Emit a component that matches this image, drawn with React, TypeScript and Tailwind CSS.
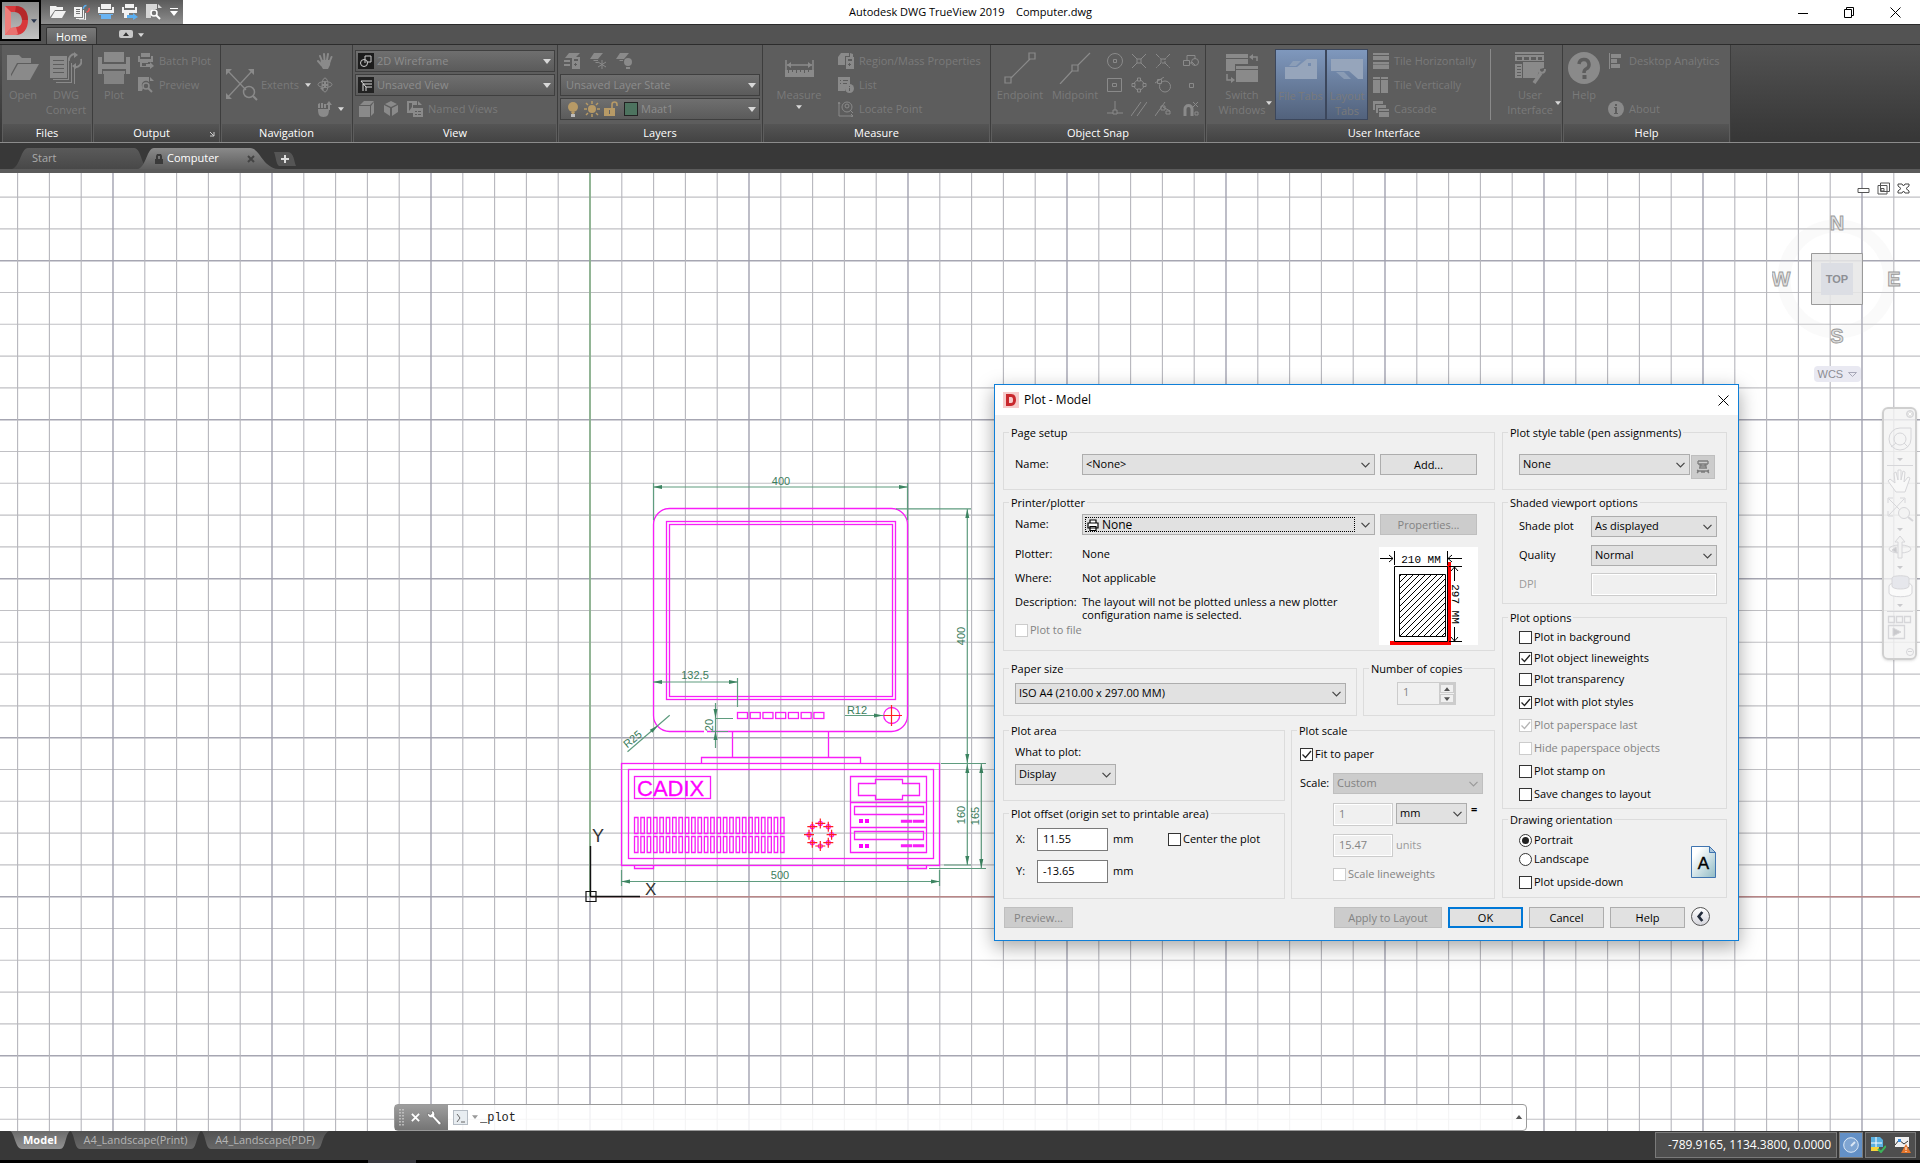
import type { ReactNode } from "react";
import clsx from "clsx";
import { twMerge } from "tailwind-merge";

const UI = "font-['Open_Sans','Noto_Sans',sans-serif]";

/* ---------- small helpers ---------- */

function Ico({ s = 16, className, children }: { s?: number; className?: string; children: ReactNode }) {
    return (
        <svg viewBox={`0 0 ${s} ${s}`} width={s} height={s} fill="currentColor" className={clsx("shrink-0", className)} aria-hidden="true">
            {children}
        </svg>
    );
}

function Caret({ className }: { className?: string }) {
    return (
        <svg viewBox="0 0 8 5" className={twMerge("h-[4px] w-[6px] shrink-0 fill-[#d8d8d8]", className)} aria-hidden="true">
            <path d="M0 0h8L4 5z" />
        </svg>
    );
}

/* ---------- ribbon icons ---------- */

const line = { fill: "none", stroke: "currentColor" };

const icons = {
    folder: <Ico s={32}><path d="M0 3h12l3 3h9v5H10L4 22v6H0z" /><path d="M11 12h21l-9 16H2z" /></Ico>,
    convert: (
        <Ico s={32}>
            <path fillRule="evenodd" d="M0 4h17v22H0zM3 8v1h11V8zm0 4v1h11v-1zm0 4v1h11v-1zm0 4v1h11v-1z" />
            <path d="M18 8h1v20H3v-1h15zM21 11h1v20H6v-1h15zM24 13h1v20H9v-1h15z" />
            <path {...line} strokeWidth="2" d="M19 9a6 6 0 0 1 6-7M31 7a6 6 0 0 1-7 8" />
            <path d="M24 0l4 3-4 3zM26 17l-4-3 4-3z" />
        </Ico>
    ),
    plot: <Ico s={32}><path d="M6 0h20v10H6zM0 5h4v7h24V5h4v17h-4v-5H4v5H0z" /><path d="M5 19h22v3H5zM6 22h20v10H6z" opacity=".85" /></Ico>,
    batch: <Ico><path d="M3 0h9v4H3zM0 3h2v3h11V3h2v6H0z" /><path d="M2 9h8v1H4v3h5v1H2zM8 11h4V9l4 4-4 3v-2H8z" /></Ico>,
    preview: <Ico><path d="M0 0h11v5a4 4 0 0 0-6 6l-1 3H0zM12 0l4 4h-4z" /><circle cx="8" cy="9" r="3" {...line} strokeWidth="1.5" /><path {...line} strokeWidth="2" d="M10 11l4 4" /></Ico>,
    extents: (
        <Ico s={32}>
            <path {...line} strokeWidth="1.3" d="M2 2l18 19M26 2L2 28" />
            <path d="M0 0h6L0 6zM28 0v6l-6-6zM0 30v-6l6 6z" />
            <circle cx="23" cy="23" r="5.5" {...line} strokeWidth="1.5" /><path {...line} strokeWidth="2" d="M27 27l4 4" />
        </Ico>
    ),
    hand: (
        <Ico>
            <path {...line} strokeWidth="2" strokeLinecap="round" d="M5 8L3 3M7.500 7L7 1M10 7l1-6M12.500 9l2-5M4.500 12L1 8" />
            <path d="M4 7h9.500l-.5 5-2 4H6l-3-5z" />
        </Ico>
    ),
    orbit: <Ico><ellipse cx="8" cy="7.500" rx="7" ry="3" {...line} /><ellipse cx="8" cy="8" rx="3" ry="7" {...line} /><path d="M7 5h2v2h2v2H9v2H7V9H5V7h2zM3 11l4-1-1 4z" /></Ico>,
    steer: <Ico><path d="M1 8h11c0 5-1 8-5.500 8S1 13 1 8zM1 3l2-1v5H1zM4 2h2v5H4zM7 3h2v4H7zM12 0l3 4h-2v5h-2V4H9z" /></Ico>,
    cube: <Ico><path d="M0 5h11v11H0zM1 4l4-4h10l-4 4zM12 5l3-4v11l-3 3z" /></Ico>,
    iso: <Ico><path d="M8 0l6 3-6 3-6-3zM1 4l6 3v8l-6-4zM15 4L9 7v8l6-4z" /></Ico>,
    named: <Ico><path fillRule="evenodd" d="M0 0h10v4H6v8H0zM2 10l3-4V2H2zM11 0l4 4h-4z" /><path fillRule="evenodd" d="M6 7h10v9H6zM8 10v1h2v-1zm3 0v1h3v-1zm-3 3v1h2v-1zm3 0v1h3v-1z" /></Ico>,
    wire: <Ico><path d="M0 0h16v16H0z" fill="#1c1c1c" /><circle cx="6" cy="10" r="3.5" fill="none" stroke="#ccc" /><path fill="none" stroke="#ccc" d="M7 10V3h6v6H9" /></Ico>,
    unview: <Ico><path d="M0 0h16v16H0z" fill="#222" /><path fill="none" stroke="#ddd" d="M3 4h11M5 14V7h9M8 14v-4h6M3 4l5 6" /></Ico>,
    layerProps: <Ico><path d="M5 0h11l-5 5H1zM0 7h6v2H0zM0 11h6v2H0z" /><path fillRule="evenodd" d="M8 4h8v12H8zM10 6v2h4V6zm1 4v1h-1v1h1v1h1v-1h1v-1h-1v-1z" /></Ico>,
    layerFreeze: <Ico><path d="M4 0h9L8 6H0zM3 7h5v1H4zM5 9h3v1H6z" /><path {...line} d="M12 7v9M8 9l8 5M16 9l-8 5" /></Ico>,
    layerOff: <Ico><path d="M4 0h9L8 6H0zM3 7h4v1H4z" /><circle cx="12" cy="9" r="4" /><path d="M10 14h4v2h-4z" /></Ico>,
    bulb: <Ico className="text-[#b79a66]"><circle cx="8" cy="6" r="5" /><path d="M6 11h4l-1 2H7z" /><path d="M6 13h4v3H6z" fill="#bbb" /></Ico>,
    sun: <Ico className="text-[#b79a66]"><circle cx="8" cy="8" r="4" /><path {...line} strokeWidth="1.5" d="M8 0v3M8 13v3M0 8h3M13 8h3M2 2l2 2M12 12l2 2M14 2l-2 2M4 12l-2 2" /></Ico>,
    lock: <Ico className="text-[#b79a66]"><path fillRule="evenodd" d="M1 7h11v8H1zM6 9v4h1V9z" /><path {...line} strokeWidth="1.6" d="M9 7V3.500a2.500 2.500 0 0 1 5 0V5" /></Ico>,
    measure: <Ico s={32}><path {...line} strokeWidth="1.5" d="M3 8v10M30 8v10M4 13h25" /><path d="M4 13l4-3v6zM29 13l-4-3v6z" /><path fillRule="evenodd" d="M2 18h29v7H2zM5 18v3h1v-3zm4 0v2h1v-2zm4 0v3h1v-3zm4 0v2h1v-2zm4 0v3h1v-3zm4 0v2h1v-2z" /></Ico>,
    region: <Ico><path d="M0 4l3-4h8v3H7v9H0z" /><path d="M12 0l3 1v3h-3z" /><path fillRule="evenodd" d="M8 4h8v12H8zM10 6v2h4V6zm1 4v1h-1v1h1v1h1v-1h1v-1h-1v-1z" /></Ico>,
    list: <Ico><path fillRule="evenodd" d="M0 0h12v7l-5 5v2H0zM2 3v1h1V3zm3 0v1h5V3zM2 6v1h1V6zm3 0v1h4V6z" /><circle cx="11.500" cy="11.500" r="4.500" /><path d="M11 11h1v3h-1zM11 9h1v1h-1z" fill="#5d5d5d" /></Ico>,
    locate: <Ico><path {...line} d="M1 2v13h14M0 3l1-2 1 2M13 13l2 2-2 1" /><circle cx="9" cy="6" r="5" {...line} /><circle cx="9" cy="5" r="2" {...line} /><path {...line} d="M12 9l3 3" /></Ico>,
    endpoint: <Ico s={32}><path {...line} strokeWidth="1.2" d="M1 25h6v6H1zM25 1h6v6h-6zM7 26L26 7" /></Ico>,
    midpoint: <Ico s={32}><path {...line} strokeWidth="1.2" d="M1 32L13 19M19 13L31 1M13 13h6v6h-6z" /></Ico>,
    switchWin: <Ico s={32}><path d="M0 2h22v4H0zM0 7h22v5H9v7H0zM10 14h22v3H10zM10 18h22v12H10z" /><path {...line} strokeWidth="1.5" d="M24 5h7v4M1 22v6h6" /><path d="M23 5l4-3v6zM9 28l-4-3v6z" /></Ico>,
    fileTab: <Ico s={32} className="text-[#96a5bb]"><path fillRule="evenodd" d="M0 14h12l10-8h10v20H0zM23 10v3h3v-3z" /><path d="M4 13l4-5h8l-5 5z" opacity=".7" /></Ico>,
    layoutTab: <Ico s={32} className="text-[#96a5bb]"><path d="M0 6h32v20h-5l-9-8H0z" /><path d="M5 19h8l7 7h-7z" opacity=".7" /></Ico>,
    tileH: <Ico><path d="M0 0h16v2H0zM0 3h16v4H0zM0 9h16v2H0zM0 11.500h16V16H0z" /></Ico>,
    tileV: <Ico><path d="M0 0h7v2H0zM0 3h7v13H0zM8 0h7v2H8zM8 3h7v13H8z" /></Ico>,
    cascade: <Ico><path d="M0 0h10v3H2v6H0zM3 4h10v3H5v5H3zM6 8h10v2H6zM6 11h10v5H6z" /></Ico>,
    userUi: <Ico s={32}><path fillRule="evenodd" d="M1 0h29v2H1zM1 3h29v6H1zM3 5v3h5V5zm7 0v3h5V5zm7 0v3h5V5zm7 0v3h4V5zM1 12h7v14H1zM3 14v1h4v-1zm0 3v1h4v-1zm0 3v1h4v-1zm0 3v1h4v-1z" /><path d="M9 10h21v6l-4 1-3 8v1H9z" /><path {...line} strokeWidth="3.500" d="M20 31l7-10" /><path {...line} strokeWidth="2" d="M25 17c0 5 6 5 6 0" /></Ico>,
    help: <Ico s={32}><circle cx="16" cy="16" r="16" /><path d="M11 12a5 5 0 1 1 7 5c-2 1-2 2-2 4" fill="none" stroke="#5d5d5d" strokeWidth="3.500" /><path d="M14.500 23h4v4h-4z" fill="#5d5d5d" /></Ico>,
    desk: <Ico><path d="M1 0h1v16H1zM3 1h10v4H3zM3 6h6v4H3zM3 11h9v4H3z" /></Ico>,
    about: <Ico><circle cx="8" cy="8" r="8" /><path d="M6 6h3v6h1v1H6v-1h1V7H6zM7 3h2v2H7z" fill="#5d5d5d" /></Ico>,
};

const snaps: ReactNode[] = [
    <><circle cx="8" cy="8" r="7.500" /><path d="M6.500 6.500h3v3h-3z" /></>,
    <path d="M1 1l5 5M10 10l5 5M15 1l-5 5M6 10l-5 5M6 6h4v4H6z" />,
    <path d="M1 1l5 5M10 10l5 5M15 1l-5 5M6 10l-5 5M6 6h4v4H6z" strokeDasharray="5 1" />,
    <><path d="M4 7V2.500h8V6M.5 7.500h6v5h-6zM6 10h3" /><circle cx="12" cy="9" r="3.500" /><path d="M9 9l3 3" /></>,
    <path d="M.5 1.500h14v13H.5zM5.500 6.500h4v3h-4z" />,
    <><circle cx="8" cy="8" r="5" /><path d="M6.500 1h3v3h-3zM6.500 12h3v3h-3zM1 6.500h3v3H1zM12 6.500h3v3h-3z" fill="#5d5d5d" /></>,
    <><circle cx="10" cy="9.500" r="5.500" /><path d="M0 6L9 0M2.500 2.500h4v4h-4z" /></>,
    <path d="M6.500 6.500h4v4h-4z" />,
    <path d="M8 0v9M6 9h4v4H6zM0 12h6M10 12h6" />,
    <path d="M0 15L10 1M6 15L16 1" />,
    <path d="M0 15L10 1M6 5h4v4H6zM8 6l7 4M11 10h4v3h-4z" />,
    <><path strokeWidth="3" d="M2 15V8a3 3 0 0 1 7 0v7" /><path d="M10 1l5 5M15 1l-5 5M12 11h3v3h-3z" /></>,
];

/* ---------- ribbon ---------- */

function Panel({ title, className, children, launcher }: { title: string; className: string; children: ReactNode; launcher?: boolean }) {
    return (
        <section className={clsx("flex shrink-0 flex-col border-r border-[#3d3d3d]", className)}>
            <div className="flex h-[79px] bg-[#5d5d5d] pt-1 text-[#8a8a8a]">{children}</div>
            <div className={clsx("relative h-[18px] border-x border-[#5d5d5d] bg-linear-to-b from-[#555] to-[#434343] text-center leading-[17px] text-white", launcher && "pr-[10px]")}>
                {title}
                {launcher && <svg viewBox="0 0 6 6" className="absolute right-1 top-[7px] size-[6px]" fill="none" stroke="#ccc"><path d="M1 1l4 4M5 1v4H1" /></svg>}
            </div>
        </section>
    );
}

function Big({ icon, label, className, caret, active }: { icon: ReactNode; label: string[]; className?: string; caret?: boolean; active?: boolean }) {
    return (
        <button className={clsx("relative flex h-[71px] shrink-0 flex-col items-center pt-[3px]", active && "border border-[#3c475c] bg-linear-to-b from-[#7f98bd] to-[#52627c]", className)}>
            {icon}
            <span className="mt-[3px] flex flex-col whitespace-nowrap leading-[15px] text-[#7a7a7a]">
                {label.map((l) => <span key={l}>{l}</span>)}
            </span>
            {caret && <Caret className="absolute -right-1 top-[52px]" />}
        </button>
    );
}

function Small({ icon, label, caret }: { icon: ReactNode; label?: string; caret?: boolean }) {
    return (
        <button className="flex h-6 items-center gap-[5px] whitespace-nowrap text-[#7a7a7a]" aria-label={label ?? "Tool"}>
            <span className="text-[#8a8a8a]">{icon}</span>
            {label}
            {caret && <Caret />}
        </button>
    );
}

function RibbonCombo({ label, value, icon }: { label: string; value: string; icon?: ReactNode }) {
    return (
        <div className="my-[1px] flex h-[22px] items-center border border-[#3f3f3f] bg-linear-to-b from-[#6f6f6f] to-[#5b5b5b] pl-[2px] pr-[3px]">
            {icon}
            <select aria-label={label} className="h-full min-w-0 flex-1 appearance-none pl-[3px] text-[#8d8d8d] outline-none">
                <option>{value}</option>
            </select>
            <Caret className="h-[5px] w-[8px]" />
        </div>
    );
}

function Ribbon() {
    return (
        <div className="flex border-b border-t border-b-[#8c8c8c] border-t-[#2c2c2c] bg-linear-to-b from-[#525252] to-[#363636] pl-[2px]">
            <Panel title="Files" className="w-[91px]">
                <Big icon={icons.folder} label={["Open"]} className="ml-[5px] w-8" />
                <Big icon={icons.convert} label={["DWG", "Convert"]} className="ml-1 w-[46px]" />
            </Panel>
            <Panel title="Output" className="w-[128px]" launcher>
                <Big icon={icons.plot} label={["Plot"]} className="ml-[5px] w-8" />
                <div className="ml-2">
                    <Small icon={icons.batch} label="Batch Plot" />
                    <Small icon={icons.preview} label="Preview" />
                </div>
            </Panel>
            <Panel title="Navigation" className="w-[132px]">
                <button className="ml-[5px] flex h-[72px] items-center gap-[3px] text-[#7a7a7a]">
                    <span className="text-[#8a8a8a]">{icons.extents}</span>
                    Extents <Caret className="ml-[3px]" />
                </button>
                <div className="ml-[6px]">
                    <Small icon={icons.hand} />
                    <Small icon={icons.orbit} />
                    <Small icon={icons.steer} caret />
                </div>
            </Panel>
            <Panel title="View" className="w-[205px]">
                <div className="flex flex-1 flex-col px-[2px]">
                    <RibbonCombo label="Visual style" value="2D Wireframe" icon={icons.wire} />
                    <RibbonCombo label="View" value="Unsaved View" icon={icons.unview} />
                    <div className="flex gap-2 pl-1">
                        <Small icon={icons.cube} />
                        <Small icon={icons.iso} />
                        <Small icon={icons.named} label="Named Views" />
                    </div>
                </div>
            </Panel>
            <Panel title="Layers" className="w-[205px]">
                <div className="flex flex-1 flex-col px-[2px]">
                    <div className="flex gap-[10px] pl-1">
                        <Small icon={icons.layerProps} />
                        <Small icon={icons.layerFreeze} />
                        <Small icon={icons.layerOff} />
                    </div>
                    <RibbonCombo label="Layer state" value="Unsaved Layer State" />
                    <RibbonCombo label="Layer" value="Maat1" icon={<span className="flex items-center gap-[3px] pl-[2px]">{icons.bulb}{icons.sun}{icons.lock}<span className="ml-[2px] size-[14px] border border-[#222] bg-[#4d735f]" /></span>} />
                </div>
            </Panel>
            <Panel title="Measure" className="w-[228px]">
                <div className="relative">
                    <Big icon={icons.measure} label={["Measure"]} className="ml-3 w-12" />
                    <Caret className="absolute left-[33px] top-[56px]" />
                </div>
                <div className="ml-[15px]">
                    <Small icon={icons.region} label="Region/Mass Properties" />
                    <Small icon={icons.list} label="List" />
                    <Small icon={icons.locate} label="Locate Point" />
                </div>
            </Panel>
            <Panel title="Object Snap" className="w-[215px]">
                <Big icon={icons.endpoint} label={["Endpoint"]} className="ml-[5px] w-12" />
                <Big icon={icons.midpoint} label={["Midpoint"]} className="ml-[6px] w-[50px]" />
                <div className="ml-[7px] grid auto-rows-[24px] grid-cols-[24px_24px_28px_16px]">
                    {snaps.map((s, i) => (
                        <button key={i} aria-label={`Snap mode ${i + 1}`} className="flex items-center">
                            <svg viewBox="0 0 16 16" className="size-4" fill="none" stroke="currentColor">{s}</svg>
                        </button>
                    ))}
                </div>
            </Panel>
            <Panel title="User Interface" className="w-[357px]">
                <Big icon={icons.switchWin} label={["Switch", "Windows"]} className="ml-[10px] w-[52px]" caret />
                <Big icon={icons.fileTab} label={["File Tabs"]} className="ml-[7px] w-[51px]" active />
                <Big icon={icons.layoutTab} label={["Layout", "Tabs"]} className="w-[42px] text-center" active />
                <div className="ml-[5px] w-[117px]">
                    <Small icon={icons.tileH} label="Tile Horizontally" />
                    <Small icon={icons.tileV} label="Tile Vertically" />
                    <Small icon={icons.cascade} label="Cascade" />
                </div>
                <div className="h-[71px] border-l border-[#8a8a8a]" />
                <Big icon={icons.userUi} label={["User", "Interface"]} className="ml-3 w-[54px] text-center" caret />
            </Panel>
            <Panel title="Help" className="w-[168px]">
                <Big icon={icons.help} label={["Help"]} className="ml-[5px] w-8" />
                <div className="ml-[8px]">
                    <Small icon={icons.desk} label="Desktop Analytics" />
                    <div className="h-6" />
                    <Small icon={icons.about} label="About" />
                </div>
            </Panel>
        </div>
    );
}

function TitleBar() {
    return (
        <header className="relative">
            <div className="flex h-6 bg-white text-black">
                <div className="flex w-[183px] shrink-0 items-center gap-2 bg-linear-to-b from-[#5a5a5a] to-[#8e8e8e] pl-[50px] text-[#f2f2f2]">
                    <Ico><path d="M0 2h6l1 1h6v3H5L0 13z" /><path d="M5 7h11l-4 7H1z" /></Ico>
                    <Ico><path fillRule="evenodd" d="M0 3h8v10H0zM2 5v1h4V5zm0 2v1h4V7zm0 2v1h4V9z" /><path d="M9 6h1v9H2v-1h7zM11 9h1v7H5v-.5h6z" /><path fill="none" stroke="#5aaef0" strokeWidth="1.500" d="M9.500 5a3 3 0 0 1 3-3.500" /><path fill="none" stroke="#e55" strokeWidth="1.500" d="M15 4a3 3 0 0 1-2.500 4" /></Ico>
                    <Ico><path d="M3 0h10v5H3zM0 3h2v3h12V3h2v6H0z" /><path d="M1 10h14v1H1zM3 11h10v4H3z" fill="#6ab4f3" /></Ico>
                    <Ico><path d="M3 0h9v4H3zM0 3h2v3h11V3h2v6H0zM2 9h5v5H2z" /><path d="M5 11h6V9l5 4-5 3v-2H5z" fill="#5aaef0" /></Ico>
                    <Ico className="text-[#d5d5d5]"><path d="M0 0h11v5H7L5 9v5H0zM12 0l4 4h-4z" /><circle cx="8" cy="9" r="3" fill="none" stroke="#fff" strokeWidth="1.500" /><path fill="none" stroke="#fff" strokeWidth="2" d="M10 11l4 4" /></Ico>
                    <svg viewBox="0 0 8 8" className="size-2" fill="#fff"><path d="M0 0h8v1H0zM0 3h8L4 8z" /></svg>
                </div>
                <h1 className="flex-1 whitespace-pre pr-10 text-center leading-6">Autodesk DWG TrueView 2019    Computer.dwg</h1>
                <div className="flex items-center gap-[35px] pr-[19px] text-black">
                    <button aria-label="Minimize"><svg viewBox="0 0 11 11" className="size-[11px]" fill="none" stroke="currentColor"><path d="M0 6.500h10" /></svg></button>
                    <button aria-label="Restore"><svg viewBox="0 0 11 11" className="size-[11px]" fill="none" stroke="currentColor"><path d="M.5 2.500h7v8h-7zM2.500 2V.5h7v8H8" /></svg></button>
                    <button aria-label="Close"><svg viewBox="0 0 11 11" className="size-[11px]" fill="none" stroke="currentColor"><path d="M.5.5l10 10M10.500.5l-10 10" /></svg></button>
                </div>
            </div>
            <div className="flex h-5 items-end border-t border-[#2a2a2a] bg-[#535353] pl-[46px]">
                <button className="h-[17px] w-[51px] rounded-t-xs border border-b-0 border-[#333] bg-linear-to-b from-[#7a7a7a] to-[#606060] leading-[15px] text-white">Home</button>
                <button className="mb-[6px] ml-[22px] flex h-2 w-[14px] items-center justify-center rounded-xs bg-[#c8c8c8]" aria-label="Collapse ribbon"><Caret className="rotate-180 fill-[#333]" /></button>
                <Caret className="mb-[7px] ml-[5px]" />
            </div>
            {/* application menu button hangs over both bars */}
            <button aria-label="Application menu" className="absolute left-0 top-0 flex h-[41px] w-[41px] items-center gap-[2px] border-2 border-black bg-linear-to-b from-[#8a8a8a] to-[#c4c4c4] pl-[3px]">
                <svg viewBox="0 0 24 30" className="h-[30px] w-6 shrink-0">
                    <path fillRule="evenodd" fill="#d8383b" d="M0 0h11c7 0 12 5 12 14s-5 15-12 15H0zM6 6v16l5-1c4 0 6-3 6-7s-3-8-7-8z" />
                    <path fill="#ee7f7c" d="M0 0l6 6v16l-6 7z" />
                    <path fill="#9f1c20" d="M11 0c7 0 12 5 12 14l-6 0c0-4-3-8-7-8z" opacity=".6" />
                    <path fill="#f59a94" d="M0 29l6-7 5-1 2 7-2 1z" opacity=".6" />
                </svg>
                <Caret className="fill-[#2b3850]" />
            </button>
        </header>
    );
}

function FileTabs() {
    return (
        <nav className="flex items-end border-b-4 border-[#5b5b5b] bg-[#383838] pl-[12px] pt-[5px]">
            <button className="h-[21px] w-[138px] bg-linear-to-b from-[#5a5a5a] to-[#484848] pl-5 text-left text-[#aaa] [clip-path:path('M0_21C8_19_9_0_16_0H122C130_0_129_21_138_21Z')]">Start</button>
            <div className="-ml-[12px] flex h-[21px] w-[140px] items-center bg-linear-to-b from-[#8a8a8a] to-[#5e5e5e] pl-[17px] pr-[18px] [clip-path:path('M0_21C8_19_9_0_16_0H112C122_0_124_19_140_21Z')]">
                <svg viewBox="0 0 8 10" className="h-[10px] w-[8px]" fill="#3a3a3a"><path fillRule="evenodd" d="M1 5V2l1-2h4l1 2v3h1v5H0V5zm2 0h2V2H3z" /></svg>
                <button className="ml-[4px] text-white">Computer</button>
                <button className="ml-auto mr-[5px]" aria-label="Close tab"><svg viewBox="0 0 8 8" className="size-2" fill="none" stroke="#444" strokeWidth="2"><path d="M1 1l6 6M7 1L1 7" /></svg></button>
            </div>
            <button aria-label="New tab" className="-ml-1 mb-[3px] flex h-[14px] w-[22px] items-center justify-center bg-[#555] [clip-path:path('M0_0H14C20_0_20_10_22_14H5C2_12_2_5_0_0Z')]">
                <svg viewBox="0 0 8 8" className="size-2" fill="#ddd"><path d="M3 0h2v3h3v2H5v3H3V5H0V3h3z" /></svg>
            </button>
        </nav>
    );
}

/* ---------- model space ---------- */

const PITCH = 31.8;
const OX = 590;
const OY = 723.7;

const cols = Array.from({ length: 140 }, (_, i) => i - 18);
const rows = Array.from({ length: 90 }, (_, i) => i - 60);

function Grid() {
    return (
        <g>
            {rows.map((i) => <path key={`r${i}`} d={`M0 ${OY + i * PITCH}H4000`} stroke={i % 5 ? "#c0c0c4" : "#a6a6b2"} strokeWidth={i % 5 ? 1.100 : 1.400} />)}
            {cols.map((i) => <path key={`c${i}`} d={`M${OX + i * PITCH} 0V2600`} stroke={i % 5 ? "#b6b6bc" : "#a2a2b0"} strokeWidth={i % 5 ? 1.100 : 1.400} />)}
            <path d={`M${OX} 0V${OY}`} stroke="#83b285" strokeWidth="1.500" />
            <path d={`M${OX} ${OY}H4000`} stroke="#b98787" strokeWidth="1.500" />
        </g>
    );
}

// arrow head with its tip at x,y; 0deg points right
function Arrow({ x, y, a }: { x: number; y: number; a: number }) {
    return <path d="M0 0l-9-2v4z" transform={`translate(${x} ${y}) rotate(${a})`} fill="#3c8461" stroke="none" />;
}

function Dim({ x, y, a = 0, children }: { x: number; y: number; a?: number; children: ReactNode }) {
    return <text transform={`translate(${x} ${y}) rotate(${a})`} textAnchor="middle" stroke="none" fill="#3c7d5c" fontSize="11">{children}</text>;
}

function Drawing() {
    const fins = Array.from({ length: 24 }, (_, i) => 634.5 + i * 6.350);
    const keys = Array.from({ length: 7 }, (_, i) => 737.500 + i * 12.730);
    const fan = Array.from({ length: 8 }, (_, i) => (i * Math.PI) / 4);
    return (
        <g transform="translate(0 -173)" fontFamily="'Liberation Sans', Arial, sans-serif">
            <g fill="none" stroke="#f81ef8" strokeWidth="1.300">
                <path d="M707 731.500H891.500a16 16 0 0 0 16-16V524.500a16 16 0 0 0-16-16H669.500a16 16 0 0 0-16 16V715.500a16 16 0 0 0 16 16H704" />
                <rect x="666.500" y="521.500" width="229" height="178" />
                <rect x="669.500" y="524.500" width="223" height="172" />
                {keys.map((x) => <rect key={x} x={x} y="712.500" width="10" height="6" />)}
                <circle cx="891.700" cy="715.500" r="8" />
                <path d="M732.500 731.500V757M828.500 731.500V757M701.500 763.500V757.500H860.500V763.500" />
                <rect x="621.500" y="763.500" width="318" height="102" />
                <rect x="628.500" y="769.500" width="305" height="89" />
                <rect x="634.500" y="776.500" width="76" height="22" />
                {fins.map((x) => <path key={x} d={`M${x} 817.500h3.500v16h-3.500zM${x} 836.500h3.500v16h-3.500z`} />)}
                <path d="M850.500 776.500h76v76h-76zM850.500 802.500h76M850.500 827.500h76" />
                <path d="M858.500 783.500h17v-4h27v4h17v12h-17v4h-27v-4h-17z" />
                <path d="M854.500 806.500h69v8h-69zM854.500 831.500h69v8h-69z" />
                <path d="M901.500 820.500h10v1.500h-10zM913.500 820.500h10v1.500h-10zM901.500 845h10v1.500h-10zM913.500 845h10v1.500h-10z" />
                <path d="M634.500 865.500v3h19v-3M907.500 865.500v3h19v-3" />
                <path fill="#f0f" stroke="none" d="M859 819h4v4h-4zM865 819h4v4h-4zM859 844h4v4h-4zM865 844h4v4h-4z" />
                {fan.map((t) => <circle key={t} cx={820.300 + 11.300 * Math.cos(t)} cy={834.700 + 11.300 * Math.sin(t)} r="2" strokeWidth="1.200" />)}
            </g>
            <text x="637" y="795.500" fontSize="22" fill="#f0f" stroke="#f0f" strokeWidth=".3">CADIX</text>
            <g stroke="#ff2020" strokeWidth="1.200">
                <path d="M882 715.500h20M891.500 705v21" />
                {fan.map((t) => <path key={t} d={`M${815.300 + 11.300 * Math.cos(t)} ${834.700 + 11.300 * Math.sin(t)}h10m-5 -5v10`} />)}
            </g>
            <g stroke="#5f9c7f" strokeWidth="1.200" fill="none">
                <path d="M653.500 483V520M907.500 483V520M653 487H908" />
                <path d="M896 508.800H971M967.300 509V865M941 763.500H986M981.300 763V868M944 865H971M929 868.500H986" />
                <path d="M653 682H738M737.500 678V707" />
                <path d="M715.500 703V748M715 718.500H733M711 731.500H728" />
                <path d="M627.500 751.700L669.700 715.300M845 715.500H884" />
                <path d="M621.500 870V886M939.500 870V886M621 881.500H940" />
            </g>
            <Arrow x={653} y={487} a={180} /><Arrow x={908} y={487} a={0} />
            <Arrow x={967.3} y={509} a={-90} /><Arrow x={967.3} y={763} a={90} />
            <Arrow x={967.3} y={764} a={-90} /><Arrow x={967.3} y={865} a={90} />
            <Arrow x={981.3} y={764} a={-90} /><Arrow x={981.3} y={868} a={90} />
            <Arrow x={653} y={682} a={180} /><Arrow x={738} y={682} a={0} />
            <Arrow x={715.5} y={718} a={90} /><Arrow x={715.5} y={731} a={-90} />
            <Arrow x={658} y={725.5} a={-40} /><Arrow x={883} y={715.5} a={0} />
            <Arrow x={621} y={881.5} a={180} /><Arrow x={940} y={881.5} a={0} />
            <Dim x={781} y={485}>400</Dim>
            <Dim x={695} y={679}>132,5</Dim>
            <Dim x={857} y={714}>R12</Dim>
            <Dim x={780} y={879}>500</Dim>
            <Dim x={965} y={636} a={-90}>400</Dim>
            <Dim x={713} y={725} a={-90}>20</Dim>
            <Dim x={965} y={815} a={-90}>160</Dim>
            <Dim x={979} y={816} a={-90}>165</Dim>
            <Dim x={635} y={742} a={-40}>R25</Dim>
            <g stroke="#111" fill="none">
                <path d="M586 891.500h10v10h-10z" strokeWidth="1.200" />
                <path d="M590.500 846V897M590 896.500H640" strokeWidth="1.400" />
            </g>
            <text x="592" y="842" fontSize="18" fill="#333">Y</text>
            <text x="645" y="895" fontSize="17" fill="#333">X</text>
        </g>
    );
}

function ViewCube() {
    return (
        <div className="absolute right-[18px] top-[40px] flex flex-col items-center">
            <svg viewBox="0 0 130 140" className="h-[140px] w-[130px]" fontFamily="'Liberation Sans', Arial, sans-serif" fontWeight="700" textAnchor="middle">
                <circle cx="65" cy="66" r="53" fill="none" stroke="#d8d8d8" strokeOpacity=".13" strokeWidth="13" />
                <g fontSize="20" fill="#e0e0e0" stroke="#999" strokeWidth=".9">
                    <text x="65" y="17">N</text>
                    <text x="65" y="130">S</text>
                    <text x="9" y="73">W</text>
                    <text x="122" y="73">E</text>
                </g>
                <path d="M39.500 40.500h51v51h-51z" fill="#e6e6e6" fillOpacity=".85" stroke="#9a9a9a" />
                <path d="M49 50h32v32H49z" fill="#dcdee4" />
                <text x="65" y="70" fontSize="11" fill="#8d8f95">TOP</text>
            </svg>
            <button className="mt-[13px] flex h-4 w-[47px] items-center justify-between rounded-sm bg-[#e9e9f2] px-1 font-['Liberation_Sans',Arial,sans-serif] text-[11px] text-[#8c8c92]">
                WCS
                <svg viewBox="0 0 9 5" className="h-[5px] w-[9px]" fill="none" stroke="#a8a8b8"><path d="M.5.5h8l-4 4z" /></svg>
            </button>
        </div>
    );
}

function NavBar() {
    return (
        <div className="absolute right-[3px] top-[234px] w-[35px] rounded-md border-2 border-[#cfcfcf] bg-[#f3f3f3]/80 shadow-sm">
            <svg viewBox="0 0 31 249" className="h-[249px] w-full" fill="none" stroke="#d6d6d9">
                <circle cx="26" cy="5" r="3.500" fill="#e2e2e2" /><path d="M24.500 3.500l3 3M27.500 3.500l-3 3" stroke="#fff" />
                <path d="M5 30a11 11 0 0 1 11-11h11v11a11 11 0 0 1-22 0z" /><circle cx="16" cy="30" r="6" /><path d="M12 34l-5 4M20 34l4 4" />
                <path d="M13 49h6l-3 3zM13 119h6l-3 3zM13 157h6l-3 3zM13 195h6l-3 3z" fill="#c9c9cc" stroke="none" />
                <path d="M3 56.500h26M3 202.500h26" />
                <path d="M12 83l-8-11 2-2 5 4-1-10 2-1 2 8V61h3v10l2-9 2 1-1 10 4-5 2 1-5 14z" fill="#f8f8f8" />
                <path d="M5 90l16 16M20 90L5 106M4 94v-5h5M16 89h5v5M4 102v5h5" /><circle cx="20" cy="104" r="5.500" fill="#f3f3f3" /><path d="M24 108l5 4" strokeWidth="2" />
                <ellipse cx="16" cy="140" rx="11" ry="4" /><path d="M14 149v-16h-3l5-6 5 6h-3v16z" fill="#f3f3f3" /><path d="M8 141l5 3-1-6z" fill="#c9c9cc" />
                <path d="M5 181v-4c0-5 23-5 23 0v7c0 5-23 5-23 0z" fill="#fafafa" /><path d="M8 177v-8c0-3 17-3 17 0v8c0 4-17 4-17 0z" fill="#e6e7ec" />
                <path d="M4.500 207.500h6v6h-6zM12.500 207.500h6v6h-6zM20.500 207.500h6v6h-6zM4.500 216.500h16v13h-16z" strokeWidth="1.300" /><path d="M9 219l8 4-8 4z" fill="#c9c9cc" />
                <circle cx="26" cy="243" r="3.500" /><path d="M24 242.500h4" />
            </svg>
        </div>
    );
}

function CommandLine() {
    return (
        <div className="absolute bottom-0 left-[394px] right-[393px] flex h-[27px] rounded-sm border border-[#9a9a9a] bg-white/85">
            <div className="flex w-[53px] items-center gap-[7px] bg-linear-to-b from-[#9e9e9e] to-[#757575] pl-1 text-white">
                <svg viewBox="0 0 5 18" className="h-[18px] w-[5px]" fill="none" stroke="#ccc" strokeDasharray="1.500 1.500" strokeWidth="1.500"><path d="M1 0v18M4 0v18" /></svg>
                <button aria-label="Close command line"><svg viewBox="0 0 10 10" className="size-[9px]" fill="none" stroke="#fff" strokeWidth="2"><path d="M1 1l8 8M9 1L1 9" /></svg></button>
                <button aria-label="Customize"><svg viewBox="0 0 16 16" className="size-[15px]"><path d="M5 .5v3.500L3.500 5 .8 3.200C0 6 2.500 9 5.800 8l6.700 7.500c1 .8 3-.8 2.200-2L8 6.500C9 3.500 7.500 1 5 .5z" fill="#fff" stroke="#444" strokeWidth=".5" /></svg></button>
            </div>
            <span className="ml-[5px] mt-[5px] flex size-[15px] items-center justify-center border border-[#b5bcc4] bg-[#e8edf1]">
                <svg viewBox="0 0 10 10" className="size-[10px]" fill="none" stroke="#666"><path d="M1 1l3 4-3 4M5 9h4" /></svg>
            </span>
            <Caret className="ml-1 mt-[10px] fill-[#999]" />
            <input aria-label="Command" defaultValue="_plot" className="min-w-0 flex-1 bg-transparent pl-[2px] font-['Liberation_Mono',monospace] text-[12px] text-[#222] outline-none" />
            <svg viewBox="0 0 8 5" className="mr-[3px] mt-[10px] h-[4px] w-[8px]" fill="#555"><path d="M0 5h8L4 0z" /></svg>
        </div>
    );
}

/* ---------- plot dialog ---------- */

function Group({ title, className, body, children }: { title: string; className?: string; body: string; children: ReactNode }) {
    return (
        <fieldset className={clsx("min-w-0 border border-[#dcdcdc]", className)}>
            <legend className="ml-[5px] whitespace-nowrap px-[2px] pt-[2px] leading-[14px]">{title}</legend>
            <div className={body}>{children}</div>
        </fieldset>
    );
}

function Select({ id, label, value, className, disabled, icon }: { id: string; label?: string; value: string; className?: string; disabled?: boolean; icon?: ReactNode }) {
    return (
        <span className={clsx("relative flex h-[21px] items-center border", disabled ? "border-[#bfbfbf] bg-[#ccc] text-[#838383]" : "border-[#adadad] bg-[#e1e1e1]", className)}>
            {icon}
            <select id={id} aria-label={label} disabled={disabled} className="h-full w-full min-w-0 appearance-none pl-[3px] pr-5 outline-none">
                <option>{value}</option>
            </select>
            <svg viewBox="0 0 9 6" className="pointer-events-none absolute right-1 top-[7px] h-[6px] w-[9px]" fill="none" stroke={disabled ? "#9a9a9a" : "#444"} strokeWidth="1.200"><path d="M.5.8l4 4 4-4" /></svg>
        </span>
    );
}

function Check({ label, checked, disabled, className }: { label: string; checked?: boolean; disabled?: boolean; className?: string }) {
    return (
        <label className={clsx("flex h-[13px] items-center gap-[2px] whitespace-nowrap", disabled && "text-[#838383]", className)}>
            <span className="relative size-[13px] shrink-0">
                <input type="checkbox" defaultChecked={checked} disabled={disabled} className="peer block size-[13px] appearance-none border border-[#333] bg-white disabled:border-[#ccc]" />
                <svg viewBox="0 0 13 13" className="pointer-events-none absolute inset-0 hidden size-[13px] peer-checked:block" fill="none" stroke={disabled ? "#b5b5b5" : "#222"} strokeWidth="1.300"><path d="M2.500 6.500l3 3 5.500-6.500" /></svg>
            </span>
            {label}
        </label>
    );
}

function Radio({ label, checked }: { label: string; checked?: boolean }) {
    return (
        <label className="flex h-[13px] items-center gap-[2px]">
            <span className="relative size-[13px]">
                <input type="radio" name="orientation" defaultChecked={checked} className="peer block size-[13px] appearance-none rounded-full border border-[#333] bg-white" />
                <span className="pointer-events-none absolute inset-[3px] hidden rounded-full bg-[#222] peer-checked:block" />
            </span>
            {label}
        </label>
    );
}

function Btn({ children, className, disabled, primary }: { children: ReactNode; className?: string; disabled?: boolean; primary?: boolean }) {
    return (
        <button
            disabled={disabled}
            className={clsx(
                "h-[21px] shrink-0 whitespace-nowrap",
                primary ? "border-2 border-[#0078d7] bg-[#e1e1e1] leading-[17px]" : "border leading-[19px]",
                !primary && (disabled ? "border-[#bfbfbf] bg-[#ccc] text-[#838383]" : "border-[#adadad] bg-[#e1e1e1]"),
                className
            )}
        >
            {children}
        </button>
    );
}

function Field({ id, label, value, className, disabled }: { id: string; label?: string; value: string; className?: string; disabled?: boolean }) {
    return (
        <input
            id={id}
            aria-label={label}
            defaultValue={value}
            disabled={disabled}
            className={clsx("h-[23px] min-w-0 border pb-[3px] pl-[5px] outline-none", disabled ? "border-[#ccc] bg-[#f0f0f0] text-[#838383] ring-1 ring-inset ring-white" : "border-[#7a7a7a] bg-white", className)}
        />
    );
}

function PaperPreview() {
    const hatch = Array.from({ length: 19 }, (_, i) => i * 6);
    return (
        <svg viewBox="0 0 99 98" className="mt-[5px] h-[98px] w-[99px] shrink-0 bg-white" fontFamily="'Liberation Mono', monospace" fontSize="11">
            <defs>
                <clipPath id="sheet"><path d="M21 28h45v61H21z" /></clipPath>
            </defs>
            <path d="M68 15h4v83H11v-4h57z" fill="#f00" />
            <g stroke="#000" fill="none">
                <path d="M15.500 19.500h53v75h-53z" fill="#fff" />
                <path d="M20.500 27.500h46v62h-46z" />
                <g clipPath="url(#sheet)">
                    {hatch.map((h) => <path key={h} d={`M20 ${30 + h}l50 -50`} />)}
                </g>
                <path d="M15.500 4v14M68.500 4v14M1 11.500h13M10 8l4 3.500-4 3.500M83 11.500H69M73 8l-4 3.500 4 3.500" />
                <path d="M70 19.500h13M70 94.500h13M75.500 20v14M72 24l3.500-4 3.500 4M75.500 80v14M72 90l3.500 4 3.500-4" />
            </g>
            <text x="42" y="16" textAnchor="middle">210 MM</text>
            <text transform="translate(73 57) rotate(90)" textAnchor="middle">297 MM</text>
        </svg>
    );
}

function PlotDialog() {
    return (
        <div role="dialog" aria-label="Plot - Model" className="absolute left-[994px] top-[211px] w-[745px] border border-[#0f7fd8] bg-[#f0f0f0] text-[11px] text-black shadow-[0_6px_18px_rgba(0,0,0,0.35)]">
            <div className="flex h-[30px] items-center bg-white pl-2 pr-[9px]">
                <svg viewBox="0 0 16 16" className="size-4">
                    <path d="M0 0h16v16H0z" fill="#f6cccc" />
                    <path fillRule="evenodd" d="M3 2h5c4 0 5 3 5 6s-2 6-5 6H3zM6 5v6h2c2 0 2-2 2-3s0-3-2-3z" fill="#c9282d" />
                </svg>
                <h2 className="ml-[5px] text-[12px]">Plot - Model</h2>
                <button aria-label="Close" className="ml-auto"><svg viewBox="0 0 11 11" className="size-[11px]" fill="none" stroke="#000"><path d="M.5.5l10 10M10.500.5l-10 10" /></svg></button>
            </div>

            <div className="flex gap-[7px] pl-2 pr-[11px] pt-[9px]">
                <div className="flex w-[492px] shrink-0 flex-col">
                    <Group title="Page setup" body="py-[14px] pl-[11px] pr-[17px]">
                        <div className="flex items-center">
                            <label htmlFor="setup" className="w-[67px]">Name:</label>
                            <Select id="setup" value="<None>" className="flex-1" />
                            <Btn className="ml-[5px] w-[97px]">Add...</Btn>
                        </div>
                    </Group>

                    <Group title="Printer/plotter" className="mt-1" body="pb-[5px] pl-[11px] pr-4 pt-1">
                        <div className="flex items-center pr-[1px]">
                            <label htmlFor="printer" className="w-[67px]">Name:</label>
                            <span className="relative flex-1">
                                <Select
                                    id="printer"
                                    value="None"
                                    className="text-[12px]"
                                    icon={
                                        <svg viewBox="0 0 12 12" className="ml-1 h-3 w-3 shrink-0" fill="#fff" stroke="#000" strokeWidth="1.200"><path d="M3 4V1h6v3M1 4h10v5H1zM3 7.500h6v4H3z" /></svg>
                                    }
                                />
                                <span className="pointer-events-none absolute bottom-[3px] left-[3px] right-[20px] top-[3px] border border-dotted border-black" />
                            </span>
                            <Btn disabled className="ml-[5px] w-[97px]">Properties...</Btn>
                        </div>
                        <div className="mt-[7px] flex justify-between">
                            <div>
                                <dl className="grid grid-cols-[67px_275px] leading-[13px]">
                                    <dt className="h-6 pt-[5px]">Plotter:</dt><dd className="pt-[5px]">None</dd>
                                    <dt className="h-6 pt-[5px]">Where:</dt><dd className="pt-[5px]">Not applicable</dd>
                                    <dt className="pt-[5px]">Description:</dt><dd className="pt-[5px]">The layout will not be plotted unless a new plotter configuration name is selected.</dd>
                                </dl>
                                <Check label="Plot to file" disabled className="mt-[3px]" />
                            </div>
                            <PaperPreview />
                        </div>
                    </Group>

                    <div className="mt-[9px] flex gap-[6px]">
                        <Group title="Paper size" className="flex-1" body="pb-[11px] pl-[11px] pr-[10px] pt-[7px]">
                            <Select id="paper" label="Paper size" value="ISO A4 (210.00 x 297.00 MM)" />
                        </Group>
                        <Group title="Number of copies" className="w-[132px]" body="pl-[33px] pt-[6px]">
                            <div className="flex h-[23px] w-[59px] border border-[#ccc]">
                                <input aria-label="Number of copies" disabled defaultValue="1" className="min-w-0 flex-1 pb-[3px] pl-[5px] text-[#838383]" />
                                <div className="flex w-4 flex-col gap-[1px] border border-[#ccc]">
                                    <button disabled aria-label="More" className="flex flex-1 items-center justify-center border border-[#ccc]"><Caret className="rotate-180 fill-[#555]" /></button>
                                    <button disabled aria-label="Fewer" className="flex flex-1 items-center justify-center border border-[#ccc]"><Caret className="fill-[#555]" /></button>
                                </div>
                            </div>
                        </Group>
                    </div>

                    <div className="mt-[6px] flex gap-[6px]">
                        <div className="flex flex-1 flex-col gap-1">
                            <Group title="Plot area" body="pb-[15px] pl-[11px] pt-[6px]">
                                <label htmlFor="what" className="block leading-4">What to plot:</label>
                                <Select id="what" value="Display" className="mt-1 w-[101px]" />
                            </Group>
                            <Group title="Plot offset (origin set to printable area)" body="pb-[15px] pl-3 pt-[7px]">
                                <div className="flex items-center">
                                    <label htmlFor="offx" className="w-[21px]">X:</label>
                                    <Field id="offx" value="11.55" className="w-[71px]" />
                                    <span className="ml-[5px] w-[55px]">mm</span>
                                    <Check label="Center the plot" />
                                </div>
                                <div className="mt-[9px] flex items-center">
                                    <label htmlFor="offy" className="w-[21px]">Y:</label>
                                    <Field id="offy" value="-13.65" className="w-[71px]" />
                                    <span className="ml-[5px]">mm</span>
                                </div>
                            </Group>
                        </div>
                        <Group title="Plot scale" className="w-[204px]" body="pb-[16px] pl-[8px] pr-[11px] pt-[10px]">
                            <Check label="Fit to paper" checked />
                            <div className="mt-3 flex items-center">
                                <label htmlFor="scale" className="w-[33px]">Scale:</label>
                                <Select id="scale" value="Custom" disabled className="flex-1" />
                            </div>
                            <div className="mt-[9px] flex pl-[33px]">
                                <Field id="num" label="Paper units" value="1" disabled className="w-[60px]" />
                                <Select id="unit" label="Unit" value="mm" className="ml-[3px] w-[71px]" />
                                <span className="ml-1 font-bold leading-3">=</span>
                            </div>
                            <div className="mt-2 flex items-center pl-[33px]">
                                <Field id="units" value="15.47" disabled className="w-[60px]" />
                                <label htmlFor="units" className="ml-[3px] text-[#9a9a9a]">units</label>
                            </div>
                            <Check label="Scale lineweights" disabled className="ml-[33px] mt-[11px]" />
                        </Group>
                    </div>
                </div>

                <div className="flex min-w-0 flex-1 flex-col">
                    <Group title="Plot style table (pen assignments)" body="pb-[10px] pl-4 pr-[11px] pt-[14px]">
                        <div className="flex gap-[1px]">
                            <Select id="style" label="Plot style table" value="None" className="flex-1" />
                            <button disabled aria-label="Edit plot style" className="mt-[1px] flex size-6 items-center justify-center border border-[#bfbfbf] bg-[#ccc]">
                                <svg viewBox="0 0 14 14" className="size-[14px]" fill="none" stroke="#7d7d7d" strokeWidth="1.300"><path d="M2 1h10M2 4h10M2 1v3M12 1v3M4 4v4M10 4v4M3 8h8M5 4v2h4V4" /><path d="M1 11h12M1 13l2-2-2-1M13 13l-2-2 2-1M5 12h4" /></svg>
                            </button>
                        </div>
                    </Group>
                    <Group title="Shaded viewport options" className="mt-1" body="pb-[7px] pl-4 pr-[9px] pt-[6px]">
                        <div className="flex items-center">
                            <label htmlFor="shade" className="w-[72px]">Shade plot</label>
                            <Select id="shade" value="As displayed" className="flex-1" />
                        </div>
                        <div className="mt-2 flex items-center">
                            <label htmlFor="quality" className="w-[72px]">Quality</label>
                            <Select id="quality" value="Normal" className="flex-1" />
                        </div>
                        <div className="mt-[7px] flex items-center">
                            <label htmlFor="dpi" className="w-[72px] text-[#9a9a9a]">DPI</label>
                            <Field id="dpi" value="" disabled className="flex-1" />
                        </div>
                    </Group>
                    <Group title="Plot options" className="mt-[5px]" body="pb-[7px] pl-4 pt-[6px]">
                        <div className="flex flex-col gap-2">
                            <Check label="Plot in background" />
                            <Check label="Plot object lineweights" checked />
                            <Check label="Plot transparency" />
                        </div>
                        <div className="mt-[10px] flex flex-col gap-[10px]">
                            <Check label="Plot with plot styles" checked />
                            <Check label="Plot paperspace last" checked disabled />
                            <Check label="Hide paperspace objects" disabled />
                            <Check label="Plot stamp on" />
                            <Check label="Save changes to layout" />
                        </div>
                    </Group>
                    <Group title="Drawing orientation" className="mt-[2px]" body="pb-2 pl-4 pr-[10px] pt-[7px]">
                        <div className="flex items-center justify-between">
                            <div className="flex flex-col gap-[6px]">
                                <Radio label="Portrait" checked />
                                <Radio label="Landscape" />
                                <Check label="Plot upside-down" className="mt-1" />
                            </div>
                            <svg viewBox="0 0 25 32" className="h-8 w-[25px]">
                                <defs><linearGradient id="page" x1="0" y1="0" x2="1" y2="1"><stop offset=".2" stopColor="#fff" /><stop offset="1" stopColor="#8fbac4" /></linearGradient></defs>
                                <path d="M.5.5h18l6 6v25H.5z" fill="url(#page)" stroke="#3f74b0" />
                                <path d="M18.500.5v6h6z" fill="#a9c6dd" stroke="#3f74b0" />
                                <text x="12.500" y="23" textAnchor="middle" fontSize="17" fontFamily="'Liberation Sans', sans-serif" stroke="#000" strokeWidth=".4">A</text>
                            </svg>
                        </div>
                    </Group>
                </div>
            </div>

            <div className="flex pb-3 pl-[9px] pr-[28px] pt-2">
                <Btn disabled className="w-[69px]">Preview...</Btn>
                <Btn disabled className="ml-auto w-[108px]">Apply to Layout</Btn>
                <Btn primary className="ml-[6px] w-[75px]">OK</Btn>
                <Btn className="ml-[6px] w-[75px]">Cancel</Btn>
                <Btn className="ml-[6px] w-[75px]">Help</Btn>
                <button aria-label="Fewer options" className="ml-[6px] flex size-[19px] items-center justify-center rounded-full border border-[#555] bg-linear-to-b from-white to-[#d5d5dc]">
                    <svg viewBox="0 0 10 12" className="h-[11px] w-[9px]" fill="none" stroke="#222b3a" strokeWidth="3"><path d="M7 1L3 6l4 5" /></svg>
                </button>
            </div>
        </div>
    );
}

/* ---------- bottom bars ---------- */

function StatusBar() {
    return (
        <footer className="flex h-[29px] shrink-0 items-start bg-[#383838] pl-[10px]">
            <button className="h-[18px] w-[60px] bg-linear-to-b from-[#6b6b6b] to-[#939393] font-bold text-white [clip-path:path('M0_0H60C55_4_56_18_50_18H12C5_18_5_2_0_0Z')]">Model</button>
            <button className="h-[18px] w-[131px] bg-linear-to-b from-[#525252] to-[#686868] text-[#b5b5b5] [clip-path:path('M0_0H131C126_4_127_18_121_18H10C4_18_5_2_0_0Z')]">A4_Landscape(Print)</button>
            <button className="h-[18px] w-[128px] bg-linear-to-b from-[#525252] to-[#686868] text-[#b5b5b5] [clip-path:path('M0_0H128C120_4_122_18_116_18H10C4_18_5_2_0_0Z')]">A4_Landscape(PDF)</button>
            <div className="ml-auto mr-1 mt-[1px] flex gap-[2px] text-[12px] text-white">
                <span className="h-[26px] w-[182px] border border-[#7a7a7a] bg-[#4e4e4e] pr-[5px] text-right leading-6">-789.9165, 1134.3800, 0.0000</span>
                <button aria-label="Isolate objects" className="flex h-[26px] w-6 items-center justify-center border border-[#7a7a7a] bg-[#6390c6]">
                    <svg viewBox="0 0 16 16" className="size-4" fill="#7fa5d2" stroke="#dce8f5"><circle cx="8" cy="8" r="7.300" /><path d="M8 9l4-4" strokeWidth="2" /></svg>
                </button>
                <span className="flex h-[26px] w-[51px] items-center justify-between border border-[#7a7a7a] bg-[#4e4e4e] px-[4px]">
                    <button aria-label="Hardware acceleration"><svg viewBox="0 0 16 16" className="size-4"><path d="M1 0h9l3 3v7H1z" fill="#5ab0e0" /><path d="M1 10h8v4H1z" fill="#f5d43a" /><path d="M1 6h11M6 0v10" stroke="#fff" fill="none" /><path d="M8 12l3 3 5-6" stroke="#3cb35a" strokeWidth="2" fill="none" /></svg></button>
                    <button aria-label="Drawing status"><svg viewBox="0 0 16 16" className="size-4"><path d="M0 0h14v10H0z" fill="#f0f0f0" /><path d="M0 8l4-5 5 4 4-3" stroke="#333" fill="none" /><path d="M3 2h3v3H3z" fill="#3b8ede" /><path d="M11 7l5 9H6z" fill="#e5762b" /><path d="M10.500 10h1v3h-1zM10.500 14h1v1h-1z" fill="#fff" /></svg></button>
                </span>
            </div>
        </footer>
    );
}

export default function App() {
    return (
        <div className={clsx("flex min-h-screen flex-col overflow-hidden bg-[#383838] text-[11px]", UI)}>
            <TitleBar />
            <Ribbon />
            <FileTabs />
            <main className="relative min-h-[800px] flex-1 overflow-hidden bg-white">
                <svg className="absolute inset-0 h-full w-full" aria-hidden="true">
                    <Grid />
                    <Drawing />
                </svg>
                <div className="absolute right-[10px] top-[9px] flex items-center gap-[7px]">
                    <button aria-label="Minimize drawing"><svg viewBox="0 0 13 13" className="size-[13px]" fill="#fff" stroke="#555"><path d="M1 6.500h11v4H1z" /></svg></button>
                    <button aria-label="Restore drawing"><svg viewBox="0 0 13 13" className="size-[13px]" fill="#fff" stroke="#555"><path d="M3.500 1h9v8.500h-9zM1 3.500h9V12H1z" /><path d="M4 6.500h3v2.500H4z" /></svg></button>
                    <button aria-label="Close drawing"><svg viewBox="0 0 13 13" className="size-[13px]" fill="#fff" stroke="#444"><path d="M1 2h4l1.500 2L8 2h4v2L9 6.500 12 9v2H8L6.500 9 5 11H1V9l3-2.500L1 4z" /></svg></button>
                </div>
                <ViewCube />
                <NavBar />
                <CommandLine />
                <PlotDialog />
            </main>
            <StatusBar />
            <div className="flex h-[3px] bg-black pl-[368px]"><span className="w-12 bg-[#3a3a40]" /></div>
        </div>
    );
}
